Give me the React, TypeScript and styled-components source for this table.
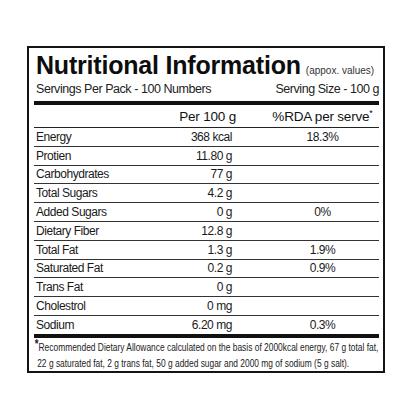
import React from 'react';
import styled, { createGlobalStyle } from 'styled-components';

const GlobalStyle = createGlobalStyle`
	html, body {
		margin: 0;
		padding: 0;
		background: #ffffff;
	}
	body {
		font-family: 'Liberation Sans', Arial, sans-serif;
		color: #111;
	}
`;

const rows = [
	{ label: 'Energy', value: '368 kcal', rda: '18.3%' },
	{ label: 'Protien', value: '11.80 g', rda: '' },
	{ label: 'Carbohydrates', value: '77 g', rda: '' },
	{ label: 'Total Sugars', value: '4.2 g', rda: '' },
	{ label: 'Added Sugars', value: '0 g', rda: '0%' },
	{ label: 'Dietary Fiber', value: '12.8 g', rda: '' },
	{ label: 'Total Fat', value: '1.3 g', rda: '1.9%' },
	{ label: 'Saturated Fat', value: '0.2 g', rda: '0.9%' },
	{ label: 'Trans Fat', value: '0 g', rda: '' },
	{ label: 'Cholestrol', value: '0 mg', rda: '' },
	{ label: 'Sodium', value: '6.20 mg', rda: '0.3%' },
];

const App: React.FC = () => {
	return (
		<>
			<GlobalStyle />
			<Panel>
				<TitleRow>
					<Title>Nutritional Information</Title>
					<Approx>(appox. values)</Approx>
				</TitleRow>
				<ServingRow>
					<span>Servings Per Pack - 100 Numbers</span>
					<span>Serving Size - 100 g</span>
				</ServingRow>
				<ThickBar />
				<HeaderRow>
					<span />
					<HeadValue>Per 100 g</HeadValue>
					<HeadRda>
						%RDA per serve<sup>*</sup>
					</HeadRda>
				</HeaderRow>
				{rows.map(({ label, value, rda }, i) => (
					<Row key={label} last={i === rows.length - 1}>
						<Label>{label}</Label>
						<Value>{value}</Value>
						<Rda>{rda}</Rda>
					</Row>
				))}
				<ThickBar />
				<Footnote>
					<Star>*</Star>Recommended Dietary Allowance calculated on the basis of 2000kcal energy, 67 g total fat,
					<br />
					22 g saturated fat, 2 g trans fat, 50 g added sugar and 2000 mg of sodium (5 g salt).
				</Footnote>
			</Panel>
		</>
	);
};

const Panel = styled.div`
	box-sizing: border-box;
	margin: 46px 0 0 27px;
	width: 358px;
	height: 327px;
	border: 2px solid #141414;
	padding: 0 2px 0 5px;
	display: flex;
	flex-direction: column;
`;

const TitleRow = styled.div`
	display: flex;
	align-items: baseline;
	height: 31px;
	padding-left: 2px;
`;

const Title = styled.h1`
	margin: 0;
	font-size: 25px;
	line-height: 35px;
	font-weight: bold;
	letter-spacing: -0.2px;
	color: #0d0d0d;
`;

const Approx = styled.span`
	margin-left: 5px;
	font-size: 10px;
	color: #333;
`;

const ServingRow = styled.div`
	display: flex;
	justify-content: space-between;
	font-size: 12.5px;
	letter-spacing: -0.45px;
	line-height: 20px;
	height: 22px;
	padding: 0 2px;
	color: #222;
`;

const ThickBar = styled.div`
	height: 4px;
	background: #111;
	margin-right: 2px;
`;

const HeaderRow = styled.div`
	display: grid;
	grid-template-columns: 140px 62px 1fr;
	height: 22px;
	align-items: center;
	font-size: 13.5px;
	letter-spacing: -0.2px;
	border-bottom: 1px solid #222;
	margin-right: 2px;
`;

const HeadValue = styled.span`
	text-align: right;
`;

const HeadRda = styled.span`
	text-align: center;
	padding-left: 30px;

	sup {
		font-size: 9px;
		line-height: 0;
	}
`;

const Row = styled.div<{ last?: boolean }>`
	display: grid;
	grid-template-columns: 140px 58px 1fr;
	height: 17.8px;
	align-items: center;
	font-size: 12px;
	letter-spacing: -0.45px;
	border-bottom: ${(props) => (props.last ? 'none' : '1px solid #333')};
	margin-right: 2px;
	color: #1a1a1a;
`;

const Label = styled.span`
	padding-left: 2px;
`;

const Value = styled.span`
	text-align: right;
`;

const Rda = styled.span`
	text-align: center;
	padding-left: 34px;
`;

const Footnote = styled.div`
	font-size: 10.5px;
	line-height: 16px;
	padding: 1px 0 0 4px;
	color: #222;
	white-space: nowrap;
	transform: scaleX(0.8);
	transform-origin: left top;
`;

const Star = styled.span`
	font-size: 12px;
	font-weight: bold;
	margin-left: -3px;
	vertical-align: top;
	line-height: 10px;
`;

export default App;
